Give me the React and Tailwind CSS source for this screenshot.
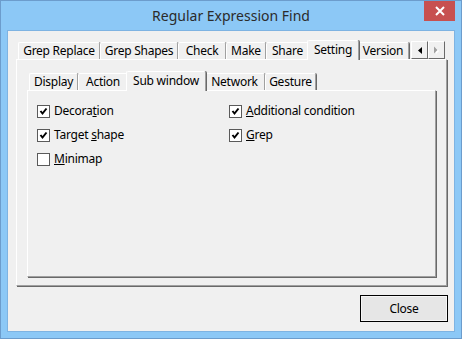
import React from 'react';

const outerTabs = [
  { label: 'Grep Replace', w: 'w-[82px]' },
  { label: 'Grep Shapes', w: 'w-[78px]' },
  { label: 'Check', w: 'w-[48px]' },
  { label: 'Make', w: 'w-[40px]' },
  { label: 'Share', w: 'w-[43px]' },
  { label: 'Setting', w: 'w-[52px]', active: true },
  { label: 'Version', w: 'w-[52px]' },
];

const innerTabs = [
  { label: 'Display', w: 'w-[49px]' },
  { label: 'Action', w: 'w-[50px]' },
  { label: 'Sub window', w: 'w-[80px]', active: true },
  { label: 'Network', w: 'w-[61px]' },
  { label: 'Gesture', w: 'w-[51px]' },
];

const Tab = ({ label, w, active }) =>
  active ? (
    <div
      className={`${w} relative z-10 -mx-[2px] -mb-px flex h-[20px] shrink-0 items-center justify-center rounded-t-[2px] border-l border-t border-r border-l-white border-t-white border-r-[#a0a0a0] bg-[#f0f0f0] pb-[2px] shadow-[1px_0_0_#696969]`}
    >
      {label}
    </div>
  ) : (
    <div
      className={`${w} flex h-[17px] shrink-0 items-center justify-center rounded-t-[2px] border-l border-t border-r border-l-white border-t-white border-r-[#a0a0a0] shadow-[1px_0_0_#696969]`}
    >
      {label}
    </div>
  );

const CheckBox = ({ checked }) => (
  <div className="flex h-[13px] w-[13px] shrink-0 items-center justify-center border border-[#5a5a5a] bg-white">
    {checked && (
      <svg width="9" height="9" viewBox="0 0 9 9">
        <path d="M1.5 4 L3.5 6.5 L7.5 1.5" stroke="#000" strokeWidth="2" fill="none" />
      </svg>
    )}
  </div>
);

const Option = ({ checked, children }) => (
  <div className="flex h-[24px] items-center gap-[4px]">
    <CheckBox checked={checked} />
    <span>{children}</span>
  </div>
);

export default function App() {
  return (
    <div
      className="relative flex h-[339px] w-[462px] flex-col border border-[#6c9ccc] bg-[#8cc8f6] px-[6px] text-[12px] tracking-[-0.25px] text-black"
      style={{ fontFamily: '"Noto Sans", sans-serif' }}
    >
      {/* title bar */}
      <div className="flex h-[29px] items-center justify-center text-[14px] tracking-normal text-[#2b2b2b]">
        Regular Expression Find
      </div>
      <button className="absolute right-[6px] top-0 flex h-[20px] w-[31px] items-center justify-center bg-[#c75050]">
        <svg width="10" height="10" viewBox="0 0 10 10">
          <path d="M1 1 L9 9 M9 1 L1 9" stroke="#fff" strokeWidth="2" />
        </svg>
      </button>

      {/* client area */}
      <div className="flex h-[302px] flex-col border border-[#7eb3e2] bg-[#f0f0f0] pl-[8px] pt-[9px]">
        {/* outer tab control */}
        <div className="relative w-[432px]">
          <div className="relative z-10 flex h-[19px] items-end pl-[2px]">
            {outerTabs.map((t) => (
              <Tab key={t.label} {...t} />
            ))}
          </div>
          <div className="absolute right-[3px] top-[1px] z-20 flex h-[18px]">
            <div className="flex w-[17px] items-center justify-center border border-b-[#696969] border-l-white border-r-[#696969] border-t-white bg-[#f0f0f0]">
              <svg width="4" height="7" viewBox="0 0 4 7">
                <path d="M4 0 L0 3.5 L4 7 Z" fill="#000" />
              </svg>
            </div>
            <div className="flex w-[17px] items-center justify-center border border-b-[#696969] border-l-white border-r-[#696969] border-t-white bg-[#f0f0f0]">
              <svg width="5" height="8" viewBox="0 0 5 8">
                <path d="M1 1 L4 4 L1 7 Z" fill="#fff" transform="translate(1 1)" />
                <path d="M0 0.5 L3.5 4 L0 7.5 Z" fill="#a0a0a0" />
              </svg>
            </div>
          </div>

          <div className="h-[227px] w-[431px] border-b border-l border-r border-t border-b-[#a0a0a0] border-l-white border-r-[#a0a0a0] border-t-white pl-[10px] pt-[11px] shadow-[1px_1px_0_#696969]">
            {/* inner tab control */}
            <div className="relative z-10 flex h-[19px] items-end pl-[2px]">
              {innerTabs.map((t) => (
                <Tab key={t.label} {...t} />
              ))}
            </div>
            <div className="h-[187px] w-[409px] border-b border-l border-r border-t border-b-[#a0a0a0] border-l-white border-r-[#a0a0a0] border-t-white pl-[9px] pt-[8px] shadow-[1px_1px_0_#696969]">
              <div className="grid grid-cols-[192px_1fr]">
                <div className="flex flex-col">
                  <Option checked>
                    Decora<span className="underline">t</span>ion
                  </Option>
                  <Option checked>
                    Target <span className="underline">s</span>hape
                  </Option>
                  <Option>
                    <span className="underline">M</span>inimap
                  </Option>
                </div>
                <div className="flex flex-col">
                  <Option checked>
                    <span className="underline">A</span>dditional condition
                  </Option>
                  <Option checked>
                    <span className="underline">G</span>rep
                  </Option>
                </div>
              </div>
            </div>
          </div>
        </div>

        {/* buttons */}
        <div className="mr-[6px] mt-[9px] flex justify-end">
          <button className="flex h-[27px] w-[88px] items-center justify-center border border-black bg-[#e6e6e6] shadow-[inset_0_0_0_1px_#f6f6f6]">
            Close
          </button>
        </div>
      </div>
    </div>
  );
}
